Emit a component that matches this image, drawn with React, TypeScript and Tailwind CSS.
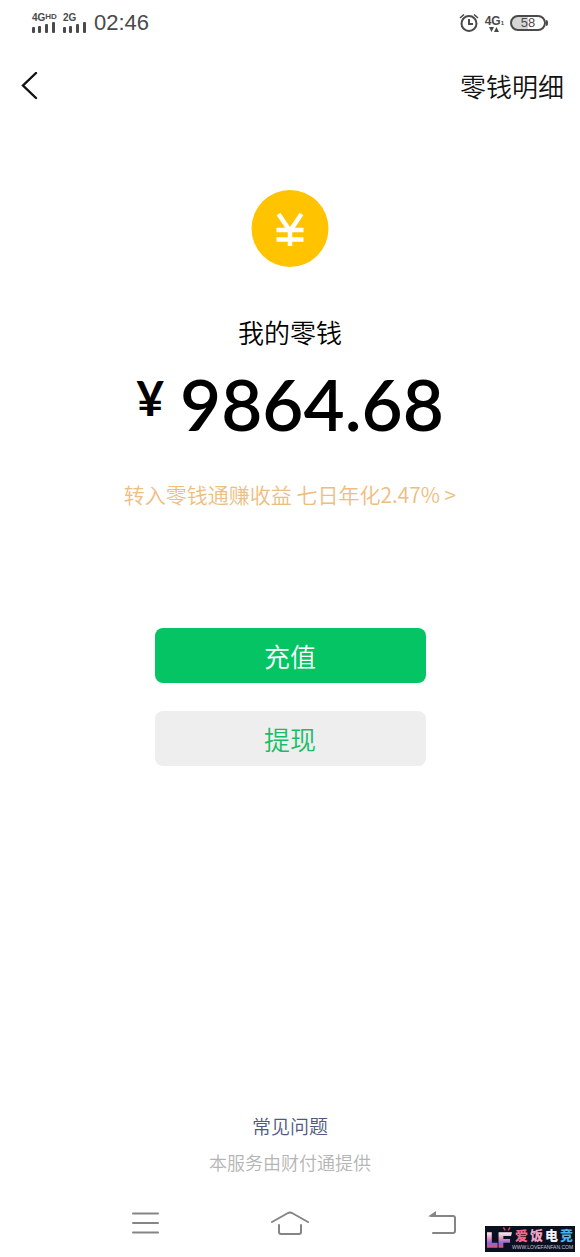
import type { ReactNode } from 'react'

function SignalBars() {
  return (
    <svg width="23" height="11" viewBox="0 0 23 11" fill="#4a4a4a" aria-hidden="true">
      <rect x="0" y="5" width="3" height="6" rx="1" />
      <rect x="6" y="4" width="3" height="7" rx="1" />
      <rect x="13" y="2" width="3" height="9" rx="1" />
      <rect x="20" y="0" width="3" height="11" rx="1" />
    </svg>
  )
}

function Signal({ children }: { children: ReactNode }) {
  return (
    <div className="flex w-[23px] flex-col">
      <span className="flex h-[9px] text-[10px] font-bold leading-[9px]">{children}</span>
      <SignalBars />
    </div>
  )
}

function StatusBar() {
  return (
    <div className="flex h-[46px] items-center justify-between px-8 font-['Liberation_Sans',sans-serif] text-[#4a4a4a]">
      <div className="flex items-center gap-2">
        <Signal>
          4G<span className="text-[8px] leading-[7px]">HD</span>
        </Signal>
        <Signal>2G</Signal>
        <time className="text-[22px] leading-6">02:46</time>
      </div>
      <div className="flex items-center gap-1.5">
        <svg width="20" height="20" viewBox="0 0 20 20" fill="none" stroke="#4a4a4a" strokeWidth="2" aria-hidden="true">
          <circle cx="10" cy="10.500" r="7.500" />
          <path d="M10 6v5h4" />
          <path d="M1 5 5 1.500M19 5l-4-3.500" strokeWidth="1.600" />
        </svg>
        <div className="flex flex-col items-center">
          <span className="flex items-end text-xs font-bold leading-3">
            4G<span className="text-[6px] leading-[8px]">1</span>
          </span>
          <svg width="10" height="5" viewBox="0 0 10 5" fill="#4a4a4a" aria-hidden="true">
            <path d="M0 0h5L2.500 5zM5 5h5L7.500 0z" />
          </svg>
        </div>
        <div className="flex items-center">
          <div className="h-4 w-9 rounded-lg border-2 border-[#4a4a4a] bg-[linear-gradient(90deg,#d6d6d6_50%,#fff_50%)] text-center text-[13px] leading-3">
            58
          </div>
          <div className="h-1.5 w-0.5 rounded-r-sm bg-[#4a4a4a]" />
        </div>
      </div>
    </div>
  )
}

function NavBar() {
  return (
    <header className="flex h-20 items-center justify-between pl-5 pr-4">
      <button aria-label="返回">
        <svg width="20" height="28" viewBox="0 0 20 28" fill="none" stroke="#111" strokeWidth="2.400" strokeLinecap="round" aria-hidden="true">
          <path d="M16 1 3 13.500 16 26" />
        </svg>
      </button>
      <button className="text-[26px] leading-8 text-[#111]">零钱明细</button>
    </header>
  )
}

function SystemNav() {
  return (
    <nav className="grid h-[66px] grid-cols-3 items-center justify-items-center px-[68px]">
      <button aria-label="最近任务" className="pl-1.5">
        <svg width="27" height="22" viewBox="0 0 27 22" stroke="#858585" strokeWidth="2" strokeLinecap="round" aria-hidden="true">
          <path d="M1 1.500h25M1 11h25M1 20.500h25" />
        </svg>
      </button>
      <button aria-label="主页">
        <svg width="38" height="24" viewBox="0 0 38 24" fill="none" stroke="#858585" strokeWidth="2" strokeLinecap="round" strokeLinejoin="round" aria-hidden="true">
          <path d="M1 11 17 2q2-1 4 0l16 9" />
          <path d="M8 14v7q0 2 2 2h18q2 0 2-2v-7" />
        </svg>
      </button>
      <button aria-label="后退" className="pl-2">
        <svg width="28" height="24" viewBox="0 0 28 24" fill="none" stroke="#858585" strokeWidth="2" strokeLinecap="round" aria-hidden="true">
          <path d="M3 5h22q2 0 2 2v13q0 2-2 2H5" />
          <path d="M0 5.500 8 0v5.500z" fill="#858585" stroke="none" />
        </svg>
      </button>
    </nav>
  )
}

function Watermark() {
  return (
    <div className="absolute bottom-[5px] right-[5px] flex h-[26px] w-[90px] justify-between overflow-hidden bg-[#0b1020] px-0.5">
      <svg width="25" height="26" viewBox="0 0 26 26" className="shrink-0" aria-hidden="true">
        <defs>
          <linearGradient id="lf" x1="0" y1="0" x2="0" y2="1">
            <stop offset="0" stopColor="#f8eef6" />
            <stop offset=".4" stopColor="#e98fb6" />
            <stop offset=".7" stopColor="#7f6bd8" />
            <stop offset="1" stopColor="#e8506c" />
          </linearGradient>
        </defs>
        <path d="M0 6h5v11h6v5H0z" fill="url(#lf)" />
        <path d="M12 6h14l-1 4h-8v3h7v4h-7v5h-5z" fill="url(#lf)" />
        <path d="m17 1 2 3M24 1l-2 3" stroke="#d84a5c" strokeWidth="1.500" />
      </svg>
      <div className="flex flex-col items-end">
        <span className="flex gap-0.5 font-['Liberation_Sans','Noto_Sans_CJK_SC',sans-serif] text-[13px] font-black leading-[19px]">
          <span className="text-[#f2688c]">爱</span>
          <span className="text-[#eda3c4]">饭</span>
          <span className="text-[#f3f0f8]">电</span>
          <span className="text-[#4bb4e6]">竞</span>
        </span>
        <span className="whitespace-nowrap font-['Liberation_Sans',sans-serif] text-[5px] leading-[5px] text-[#c4c8d6]">
          WWW.LOVEFANFAN.COM
        </span>
      </div>
    </div>
  )
}

export default function App() {
  return (
    <div className="relative flex min-h-screen flex-col bg-white pb-px font-['Noto_Sans_CJK_SC',sans-serif] font-[350]">
      <StatusBar />
      <NavBar />

      <main className="flex flex-1 flex-col items-center pt-16">
        <svg width="78" height="78" viewBox="0 0 78 78" aria-hidden="true">
          <circle cx="39" cy="38.500" r="38.500" fill="#ffc300" />
          <path d="m27.500 24 11.500 17 11.500-17M25.500 40h27M25.500 49.500h27M39 40v16" fill="none" stroke="#fff" strokeWidth="4.500" />
        </svg>

        <h1 className="mt-[46px] text-[26px] leading-9 text-black">我的零钱</h1>
        <p className="mt-[18px] flex items-start gap-4 font-[Lato,sans-serif] font-semibold text-black">
          <span className="pt-1.5 text-[48px] font-bold leading-12">¥</span>
          <span className="text-[71px] leading-[72px]">9864.68</span>
        </p>
        <a href="#" className="mt-10 text-[21px] leading-7 text-[#eebd80]">
          转入零钱通赚收益 七日年化2.47% &gt;
        </a>

        <div className="mt-[120px] flex w-[271px] flex-col gap-7">
          <button className="h-[55px] rounded-lg bg-[#04c463] text-[26px] leading-9 text-white">充值</button>
          <button className="h-[55px] rounded-lg bg-[#eeeeee] text-[26px] leading-9 text-[#18bd68]">提现</button>
        </div>
      </main>

      <footer className="flex flex-col items-center gap-2 pb-3.5">
        <a href="#" className="text-[19px] leading-7 text-[#4f5a80]">常见问题</a>
        <p className="text-[18px] leading-7 text-[#b5b5b5]">本服务由财付通提供</p>
      </footer>

      <SystemNav />
      <Watermark />
    </div>
  )
}
